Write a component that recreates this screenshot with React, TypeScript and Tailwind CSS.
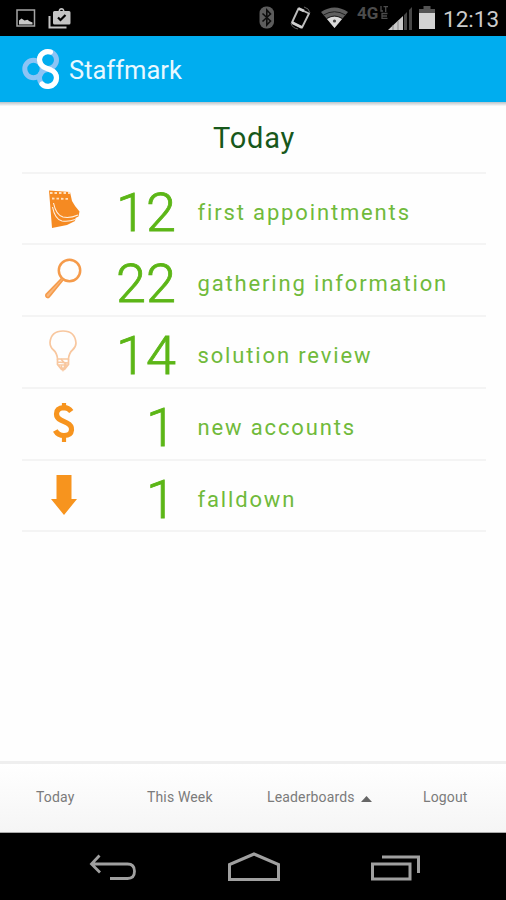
import React from "react";

const orange = "#f7941e";

function PhotoIcon() {
  return (
    <svg className="ml-4 mt-[9px] shrink-0" width="20" height="18" viewBox="0 0 20 18">
      <rect x="1" y="1" width="17.5" height="16" fill="none" stroke="#a5a5a5" strokeWidth="1.5" />
      <path d="M3 15.5v-4l2.500-2 3 2 3-.8 2 1.500 3 1.300v2z" fill="#c9c9c9" />
    </svg>
  );
}

function TaskIcon() {
  return (
    <svg className="ml-3 mt-[8px] shrink-0" width="23" height="21" viewBox="0 0 23 21">
      <path d="M1.500 8v11.500h17" fill="none" stroke="#c4c4c4" strokeWidth="2" />
      <path d="M6 3h4.500q.4-3 3-3t3 3H21q1.500 0 1.500 1.500V15q0 1.500-1.500 1.500H6.500q-1.500 0-1.500-1.500V4.500Q5 3 6.500 3z" fill="#c4c4c4" />
      <path d="M12 3h3q-.3-1.300-1.500-1.300T12 3z" fill="#000" />
      <path d="M10 9.500l2.500 2.500 5-5" fill="none" stroke="#000" strokeWidth="2.200" />
    </svg>
  );
}

function BluetoothIcon() {
  return (
    <svg className="mt-[6px] shrink-0" width="16" height="23" viewBox="0 0 16 23">
      <rect x=".5" y=".5" width="14.500" height="22" rx="6.500" fill="#5c5c5c" />
      <path d="M3.500 7.500l8 7.500-3.700 4V4l3.700 4-8 7.500" fill="none" stroke="#0c0c0c" strokeWidth="1.600" />
    </svg>
  );
}

function RotateIcon() {
  return (
    <svg className="ml-[15px] mt-[6px] shrink-0" width="22" height="25" viewBox="0 0 22 25">
      <path d="M8.500 2.500L19 7.500 12 21.500 2 16.500z" fill="none" stroke="#bcbcbc" strokeWidth="1.900" strokeLinejoin="round" />
      <path d="M2 16.500l10 5M8.500 2.500L14 5" stroke="#d0d0d0" strokeWidth="2.800" />
      <path d="M14 1q5 1 6 6M1 17q1 5 7 6" fill="none" stroke="#666" strokeWidth="1" />
    </svg>
  );
}

function WifiIcon() {
  return (
    <svg className="ml-[9px] mt-[7px] shrink-0" width="27" height="21" viewBox="0 0 27 21">
      <path d="M0 5Q13.500-4 27 5L13.500 21z" fill="#5f5f5f" />
      <path d="M6 12Q13.500 7 21 12L13.500 21z" fill="#dadada" />
      <path d="M2.500 8q11-6.500 22 0M5.500 11.500q8-5 16 0" fill="none" stroke="#202020" strokeWidth="1" />
      <circle cx="13.500" cy="14" r="1.600" fill="#444" />
    </svg>
  );
}

function SignalIcon() {
  return (
    <svg className="mt-[7px] shrink-0" width="25" height="24" viewBox="0 0 25 24">
      <path d="M0 23L15 9v14z" fill="#cacaca" />
      <path d="M16 8l3-3v18h-3zM21 3l3-3v23h-3z" fill="#474747" />
      <path d="M5 18v5M10 14v9" stroke="#888" strokeWidth="1" />
    </svg>
  );
}

function BatteryIcon() {
  return (
    <svg className="ml-[6px] mt-[6px] shrink-0" width="16" height="23" viewBox="0 0 16 23">
      <path d="M0 3h4.500V0h7v3H16v4H0z" fill="#545454" />
      <path d="M0 7h16v16H0z" fill="#d2d2d2" />
    </svg>
  );
}

function StatusBar() {
  return (
    <div className="flex h-9 shrink-0 bg-black">
      <PhotoIcon />
      <TaskIcon />
      <div className="ml-auto flex pr-[6px]">
        <BluetoothIcon />
        <RotateIcon />
        <WifiIcon />
        <div className="ml-[9px] mt-[4px] flex w-[31px] items-start text-[#4c4c4c]">
          <span className="w-[23px] text-[17px] leading-[18px] font-bold">4G</span>
          <svg className="mt-[2px]" width="8" height="13" viewBox="0 0 8 13" fill="none" stroke="#4c4c4c" strokeWidth="1.300">
            <path d="M1 0v5h2M3.500.7H8M5.700.7V6M7.500 7.500H2v4.800h5.500M2 10h5" />
          </svg>
        </div>
        <SignalIcon />
        <BatteryIcon />
        <span className="ml-[8px] w-[57px] whitespace-nowrap text-[22.500px] leading-[38px] text-[#cbcbcb]">12:13</span>
      </div>
    </div>
  );
}

function Logo() {
  return (
    <svg className="ml-[22px] mt-[13px] shrink-0" width="38" height="40" viewBox="0 0 38 40" fill="none">
      <g stroke="#8cc4f5" strokeWidth="5">
        <circle cx="11.500" cy="20" r="8.700" />
        <circle cx="26" cy="11" r="8.500" />
        <circle cx="26" cy="29" r="8.500" />
      </g>
      <path d="M28.500 3Q25 2.200 22.500 3.300Q17.500 5.500 17.500 11Q18 16.500 23.500 18.800L29 21Q34.500 23.500 34.500 29Q34 36 27 37.300Q22.500 37.800 20 35" stroke="#fff" strokeWidth="5.200" strokeLinecap="round" />
    </svg>
  );
}

function CalendarIcon() {
  return (
    <svg width="34" height="40" viewBox="0 0 34 40">
      <path d="M2 1.500L23 3 25 12Q27.500 17 32.500 22.500L31.500 27.500 28.500 29 28 32 20 36 5 39z" fill="#f58a22" />
      <path d="M3 4h20M5 9.500l18 .5" fill="none" stroke="#ffe0bd" strokeWidth="1.800" strokeDasharray="2.500 2" />
      <path d="M6.500 14Q9 26 16 28Q23 29.500 31 26M5.500 18Q8 30.500 15 32Q22 33 28 30.500" fill="none" stroke="#fff1e2" strokeWidth="1.100" />
    </svg>
  );
}

function SearchIcon() {
  return (
    <svg width="40" height="42" viewBox="0 0 40 42" fill="none" stroke="#f59b4b">
      <circle cx="26.500" cy="12.500" r="10.700" strokeWidth="2.500" />
      <path d="M18.500 20.500L3 36.500q-.7 2.500 1.500 3 1.500.4 2.500-1.500L20 22" fill="#f8b77d" strokeWidth="1.600" />
    </svg>
  );
}

function BulbIcon() {
  return (
    <svg width="28" height="42" viewBox="0 0 28 42" fill="none" stroke="#f8c79f" strokeWidth="1.700">
      <path d="M8.500 29Q8 23 4.500 20Q1 17 1 12.500Q2 1 14 1T27 13Q27 17 23.500 20Q20 23 19.500 29z" />
      <path d="M8.500 29v5.500l4 5h3l4-5V29M9 32l10 1M9 35h10M12 36l2 4 3-6M12 29l5 6" />
    </svg>
  );
}

function DollarIcon() {
  return (
    <svg width="22" height="40" viewBox="0 0 22 40" fill="none" stroke={orange}>
      <path d="M18.300 8.500Q15.500 4.700 11 4.700Q3.500 5 3.500 11Q3.500 15 8 17.200L14 20Q19 22.500 18.500 27Q18 32.500 11 32.500Q5 32.500 2.300 27.500" strokeWidth="5.200" />
      <path d="M11 0v6M11 33v6" strokeWidth="4.200" />
    </svg>
  );
}

function ArrowIcon() {
  return (
    <svg width="26" height="40" viewBox="0 0 26 40">
      <path d="M5.500 0h15v24H26L13 40 0 24h5.500z" fill={orange} />
    </svg>
  );
}

const rows = [
  { icon: <CalendarIcon />, pad: "pt-[15px] pl-[2px]", count: 12, label: "first appointments" },
  { icon: <SearchIcon />, pad: "pt-[13px]", count: 22, label: "gathering information" },
  { icon: <BulbIcon />, pad: "pt-[13px]", count: 14, label: "solution review" },
  { icon: <DollarIcon />, pad: "pt-[14px] pl-[1px]", count: 1, label: "new accounts" },
  { icon: <ArrowIcon />, pad: "pt-[14px] pl-[1px]", count: 1, label: "falldown" },
];

export default function App() {
  return (
    <div className="flex h-[900px] w-[506px] flex-col overflow-hidden bg-[#fefefe] font-[Roboto,sans-serif]">
      <StatusBar />
      <header className="flex h-[66px] shrink-0 bg-[#00adef]">
        <Logo />
        <h1 className="ml-[9px] text-[25.500px] leading-[69px] text-[#e9f8ff]">Staffmark</h1>
      </header>
      <div className="h-1 shrink-0 bg-linear-to-b from-[#b9c3c8] to-[#fafafa]" />
      <main className="flex-1 pr-[20px] pl-[22px]">
        <h2 className="h-[65.500px] text-center text-[29px] leading-[64px] tracking-[0.800px] text-[#17581b]">Today</h2>
        <ul className="border-t-2 border-[#f4f4f4]">
          {rows.map((row) => (
            <li key={row.label} className="flex h-[71.800px] border-b-2 border-[#f4f4f4]">
              <div className={`flex w-[82px] justify-center ${row.pad}`}>{row.icon}</div>
              <div className="w-[72px] pt-[3px] text-right text-[54px] leading-[71px] font-light text-[#5cb617] [-webkit-text-stroke:0.8px_#5cb617]">{row.count}</div>
              <div className="whitespace-nowrap pl-[21.500px] pt-[3px] text-[22px] leading-[71px] tracking-[1.850px] text-[#70ba3b]">{row.label}</div>
            </li>
          ))}
        </ul>
      </main>
      <nav className="flex h-[72px] shrink-0 border-t-[3px] border-b border-t-[#efefef] border-b-[#aaa] bg-linear-to-b from-white to-[#f5f5f5] text-[14px] leading-[67px] tracking-[0.150px] text-[#7b7b7b]">
        <span className="w-[111px] pl-[36px]">Today</span>
        <span className="w-[120px] pl-[36px]">This Week</span>
        <span className="flex h-[67px] w-[156px] items-center pl-[36px]">
          Leaderboards
          <svg className="ml-[6px] mt-[2px]" width="11" height="6" viewBox="0 0 11 6"><path d="M0 6l5.500-6L11 6z" fill="#666" /></svg>
        </span>
        <span className="pl-[36px]">Logout</span>
      </nav>
      <div className="flex h-[67px] shrink-0 bg-black">
        <svg className="ml-[89px] mt-[21px]" width="48" height="27" viewBox="0 0 48 27" fill="none" stroke="#a0a0a0" strokeWidth="2.800">
          <path d="M10.500 1.500L2.500 10l8.500 8.500M2 10h36.500q7 0 7 7.200t-7 7.300H21" />
        </svg>
        <svg className="ml-[91px] mt-[19px]" width="52" height="30" viewBox="0 0 52 30" fill="none" stroke="#a0a0a0" strokeWidth="3">
          <path d="M1.500 27.500V12.500L26 2l24.500 10.500v15z" />
        </svg>
        <svg className="ml-[91px] mt-[21px]" width="50" height="28" viewBox="0 0 50 28" fill="none" stroke="#a0a0a0" strokeWidth="3">
          <path d="M1.500 10h37.500v15H1.500zM11 3h36.500v16" />
        </svg>
      </div>
    </div>
  );
}
